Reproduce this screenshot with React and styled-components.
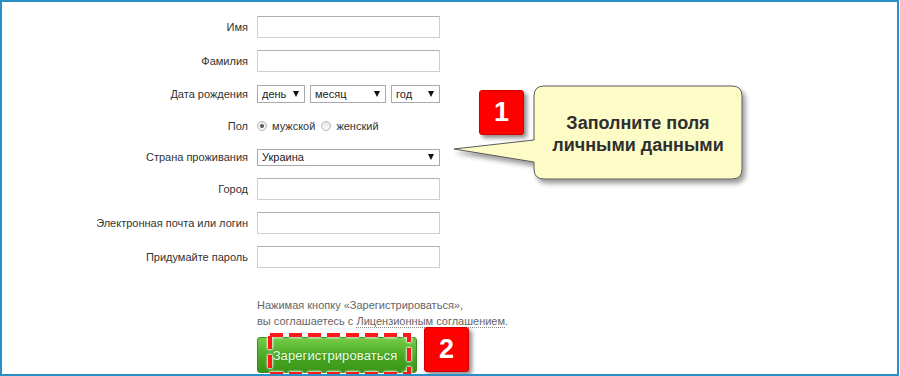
import React from "react";
import styled, { createGlobalStyle } from "styled-components";

const Global = createGlobalStyle`
  html, body { margin: 0; padding: 0; background: #fff; }
  body { font-family: "Liberation Sans", Arial, sans-serif; }
`;

const Frame = styled.div`
  position: relative;
  width: 899px;
  height: 376px;
  box-sizing: border-box;
  border: 2px solid #2a8fc8;
  background: #fff;
  overflow: hidden;
  font-family: "Liberation Sans", Arial, sans-serif;
`;

const Form = styled.div`
  display: flex;
  flex-direction: column;
  padding-top: 14px;
`;

const Row = styled.div`
  display: grid;
  grid-template-columns: 246px 183px;
  column-gap: 9px;
  align-items: center;
  height: 22px;
  margin-top: ${(p) => p.$mt || 0}px;
`;

const Label = styled.div`
  text-align: right;
  font-size: 11px;
  color: #333;
  white-space: nowrap;
`;

const TextInput = styled.div`
  width: 183px;
  height: 22px;
  box-sizing: border-box;
  border: 1px solid #cfcfcf;
  border-top-color: #b0b0b0;
  background: #fff;
`;

const DateGroup = styled.div`
  display: flex;
  gap: 5px;
  align-items: center;
`;

const SelectBox = styled.div`
  display: flex;
  align-items: center;
  justify-content: space-between;
  width: ${(p) => p.$w}px;
  height: ${(p) => p.$h || 18}px;
  box-sizing: border-box;
  border: 1px solid #a9a9a9;
  padding: 0 5px 0 4px;
  font-size: 11px;
  color: #222;
  background: #fff;
`;

const Arrow = styled.span`
  width: 0;
  height: 0;
  border-left: 3.5px solid transparent;
  border-right: 3.5px solid transparent;
  border-top: 6px solid #111;
`;

const RadioGroup = styled.div`
  display: flex;
  align-items: center;
  font-size: 11px;
  color: #333;
`;

const RadioOption = styled.label`
  display: flex;
  align-items: center;
  gap: 5px;
  margin-right: 6px;
`;

const RadioDot = styled.span`
  display: inline-flex;
  align-items: center;
  justify-content: center;
  width: 10px;
  height: 10px;
  box-sizing: border-box;
  border-radius: 50%;
  border: 1px solid #b4b4b4;
  background: linear-gradient(#e8e8e8, #fafafa);
  &::after {
    content: "";
    width: 4px;
    height: 4px;
    border-radius: 50%;
    background: ${(p) => (p.$checked ? "#555" : "transparent")};
  }
`;

const Bottom = styled.div`
  margin-left: 255px;
  margin-top: 29px;
  display: flex;
  flex-direction: column;
`;

const Note = styled.div`
  font-size: 11px;
  line-height: 16px;
  color: #666;
`;

const Link = styled.span`
  border-bottom: 1px dotted #888;
`;

const GreenButton = styled.div`
  margin-top: 8px;
  width: 160px;
  height: 36px;
  box-sizing: border-box;
  border-radius: 3px;
  border: 1px solid #3d8b1e;
  background: linear-gradient(#74cc48, #4aa824 55%, #399417);
  display: flex;
  align-items: center;
  justify-content: center;
  padding-right: 4px;
  color: #eaffe2;
  font-size: 13px;
  letter-spacing: 0.1px;
  text-shadow: 0 0 2px rgba(40, 110, 15, 0.6);
`;

const Callout = styled.div`
  position: absolute;
  left: 445px;
  top: 78px;
  width: 310px;
  height: 110px;
`;

const CalloutSvg = styled.svg`
  position: absolute;
  left: 0;
  top: 0;
`;

const CalloutText = styled.div`
  position: absolute;
  left: 87px;
  top: 7px;
  width: 208px;
  height: 93px;
  display: flex;
  align-items: center;
  justify-content: center;
  text-align: center;
  font-size: 18px;
  line-height: 22px;
  font-weight: bold;
  color: #2e2e2e;
`;

const Badge = styled.div`
  position: absolute;
  left: ${(p) => p.$x}px;
  top: ${(p) => p.$y}px;
  width: 45px;
  height: 45px;
  border-radius: 3px;
  background: #ff0000;
  border: 1px solid #d40000;
  box-sizing: border-box;
  box-shadow: 3px 3px 4px rgba(0, 0, 0, 0.45);
  display: flex;
  align-items: center;
  justify-content: center;
  color: #fff;
  font-size: 27px;
  font-weight: bold;
`;

const DashFrame = styled.svg`
  position: absolute;
  left: 265px;
  top: 330px;
  filter: drop-shadow(0 0 1px #fff) drop-shadow(0 0 1px #fff);
`;

export default function App() {
  return (
    <>
      <Global />
      <Frame>
        <Form>
          <Row $mt={0}>
            <Label>Имя</Label>
            <TextInput />
          </Row>
          <Row $mt={12}>
            <Label>Фамилия</Label>
            <TextInput />
          </Row>
          <Row $mt={11}>
            <Label>Дата рождения</Label>
            <DateGroup>
              <SelectBox $w={48}>день<Arrow /></SelectBox>
              <SelectBox $w={76}>месяц<Arrow /></SelectBox>
              <SelectBox $w={49}>год<Arrow /></SelectBox>
            </DateGroup>
          </Row>
          <Row $mt={10}>
            <Label>Пол</Label>
            <RadioGroup>
              <RadioOption><RadioDot $checked />мужской</RadioOption>
              <RadioOption><RadioDot />женский</RadioOption>
            </RadioGroup>
          </Row>
          <Row $mt={9}>
            <Label>Страна проживания</Label>
            <SelectBox $w={183} $h={17}>Украина<Arrow /></SelectBox>
          </Row>
          <Row $mt={10}>
            <Label>Город</Label>
            <TextInput />
          </Row>
          <Row $mt={12}>
            <Label>Электронная почта или логин</Label>
            <TextInput />
          </Row>
          <Row $mt={12}>
            <Label>Придумайте пароль</Label>
            <TextInput />
          </Row>
        </Form>
        <Bottom>
          <Note>
            Нажимая кнопку «Зарегистрироваться»,
            <br />
            вы соглашаетесь с <Link>Лицензионным соглашением</Link>.
          </Note>
          <GreenButton>Зарегистрироваться</GreenButton>
        </Bottom>

        <Callout>
          <CalloutSvg width="310" height="110" viewBox="0 0 310 110">
            <defs>
              <filter id="sh" x="-10%" y="-10%" width="130%" height="140%">
                <feDropShadow dx="3" dy="4" stdDeviation="2.5" floodColor="#000" floodOpacity="0.4" />
              </filter>
            </defs>
            <path
              d="M 97 6 H 285 Q 295 6 295 16 V 89 Q 295 99 285 99 H 97 Q 87 99 87 89 V 82 L 7 69 L 87 60 V 16 Q 87 6 97 6 Z"
              fill="#fefcc6"
              stroke="#5a5a5a"
              strokeWidth="1"
              filter="url(#sh)"
            />
          </CalloutSvg>
          <CalloutText>
            Заполните поля
            <br />
            личными данными
          </CalloutText>
        </Callout>

        <Badge $x={477} $y={88}>1</Badge>
        <Badge $x={422} $y={325}>2</Badge>

        <DashFrame width="146" height="46" viewBox="0 0 146 46">
          <rect
            x="3"
            y="3"
            width="139"
            height="39"
            fill="none"
            stroke="#ff1a1a"
            strokeWidth="4"
            strokeDasharray="13 6"
          />
        </DashFrame>
      </Frame>
    </>
  );
}
